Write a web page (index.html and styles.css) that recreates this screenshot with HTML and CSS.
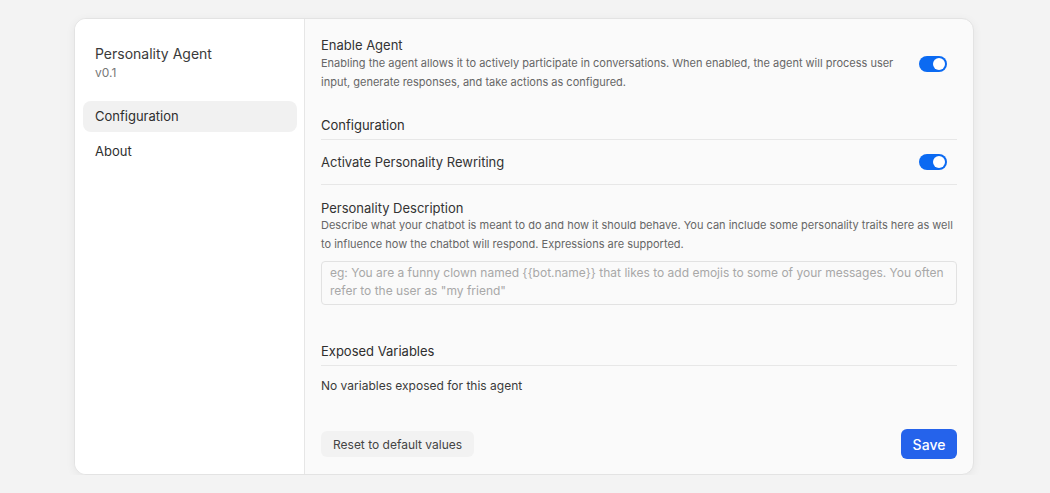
FILE: index.html
```html
<!DOCTYPE html>
<html>
<head>
<meta charset="utf-8">
<link rel="stylesheet" href="styles.css">
</head>
<body>
<div class="card">
  <aside class="sidebar">
    <div class="agent-name">Personality Agent</div>
    <div class="agent-version">v0.1</div>
    <nav class="nav">
      <div class="nav-item active">Configuration</div>
      <div class="nav-item">About</div>
    </nav>
  </aside>
  <main class="content">
    <div class="row enable-row">
      <div class="row-text">
        <div class="label">Enable Agent</div>
        <div class="desc">Enabling the agent allows it to actively participate in conversations. When enabled, the agent will process user input, generate responses, and take actions as configured.</div>
      </div>
      <div class="toggle"><span class="knob"></span></div>
    </div>

    <div class="section-title first">Configuration</div>

    <div class="row switch-row">
      <div class="label">Activate Personality Rewriting</div>
      <div class="toggle"><span class="knob"></span></div>
    </div>

    <div class="field">
      <div class="label tight">Personality Description</div>
      <div class="desc">Describe what your chatbot is meant to do and how it should behave. You can include some personality traits here as well to influence how the chatbot will respond. Expressions are supported.</div>
      <textarea class="textarea" rows="2" placeholder="eg: You are a funny clown named {{bot.name}} that likes to add emojis to some of your messages. You often refer to the user as &quot;my friend&quot;"></textarea>
    </div>

    <div class="section-title vars">Exposed Variables</div>
    <div class="empty">No variables exposed for this agent</div>

    <div class="footer">
      <button class="btn-reset">Reset to default values</button>
      <button class="btn-save">Save</button>
    </div>
  </main>
</div>
</body>
</html>
```
FILE: styles.css
```css
* { box-sizing: border-box; }
html, body { margin: 0; padding: 0; }
body {
  background: #f3f3f3;
  font-family: Inter, "Noto Sans", sans-serif;
  color: #333;
  padding-top: 18px;
}
.card {
  width: 900px;
  margin: 0 0 0 74px;
  display: flex;
  background: #fafafa;
  border: 1px solid #e3e3e3;
  border-radius: 12px;
  box-shadow: 0 2px 10px rgba(0,0,0,0.06);
  overflow: hidden;
}
.sidebar {
  width: 230px;
  flex: none;
  background: #fff;
  border-right: 1px solid #e6e6e6;
  padding: 25px 7px 0 8px;
}
.agent-name {
  font-size: 14px;
  line-height: 20px;
  color: #3a3a3a;
  padding-left: 12px;
}
.agent-version {
  font-size: 12px;
  line-height: 18px;
  color: #777;
  padding-left: 12px;
}
.nav { margin-top: 19px; display: flex; flex-direction: column; gap: 4px; }
.nav-item {
  font-size: 13px;
  line-height: 31px;
  height: 31px;
  padding-left: 12px;
  border-radius: 8px;
  color: #2e2e2e;
}
.nav-item.active { background: #f1f1f1; }
.content {
  flex: 1;
  display: flex;
  flex-direction: column;
  padding: 17px 16px 15px 16px;
}
.row { display: flex; align-items: center; justify-content: space-between; }
.enable-row { padding-right: 10px; }
.row-text { flex: 1; padding-right: 22px; }
.label { font-size: 13px; line-height: 18px; color: #333; }
.label.tight { line-height: 16px; }
.desc { font-size: 11px; line-height: 19px; color: #666; }
.toggle {
  width: 28px;
  height: 16px;
  border-radius: 8px;
  background: #0b6af2;
  position: relative;
  flex: none;
}
.knob {
  position: absolute;
  top: 2px;
  right: 2px;
  width: 12px;
  height: 12px;
  border-radius: 50%;
  background: #fff;
}
.section-title {
  font-size: 13px;
  line-height: 18px;
  color: #2e2e2e;
  padding-bottom: 5px;
  border-bottom: 1px solid #e7e7e7;
}
.section-title.first { margin-top: 24px; }
.section-title.vars { margin-top: 37px; }
.switch-row {
  height: 45px;
  padding-right: 10px;
  border-bottom: 1px solid #e7e7e7;
}
.field { padding-top: 15px; display: flex; flex-direction: column; }
.textarea {
  margin-top: 7px;
  width: 100%;
  height: 44px;
  resize: none;
  border: 1px solid #e2e2e2;
  border-radius: 4px;
  background: #fafafa;
  padding: 2px 8px;
  font-family: Inter, "Noto Sans", sans-serif;
  font-size: 12px;
  line-height: 18px;
  color: #333;
  overflow: hidden;
  outline: none;
}
.textarea::placeholder { color: #a8a8a8; }
.empty {
  margin-top: 11px;
  font-size: 12px;
  line-height: 18px;
  color: #3a3a3a;
}
.footer {
  margin-top: 34px;
  display: flex;
  align-items: center;
  justify-content: space-between;
}
.btn-reset {
  border: none;
  background: #f2f2f2;
  border-radius: 6px;
  height: 26px;
  padding: 0 12px;
  font-family: Inter, "Noto Sans", sans-serif;
  font-size: 12px;
  color: #444;
}
.btn-save {
  border: none;
  background: #2563eb;
  color: #fff;
  border-radius: 6px;
  height: 30px;
  width: 56px;
  font-family: Inter, "Noto Sans", sans-serif;
  font-size: 14px;
  font-weight: 500;
}
```
